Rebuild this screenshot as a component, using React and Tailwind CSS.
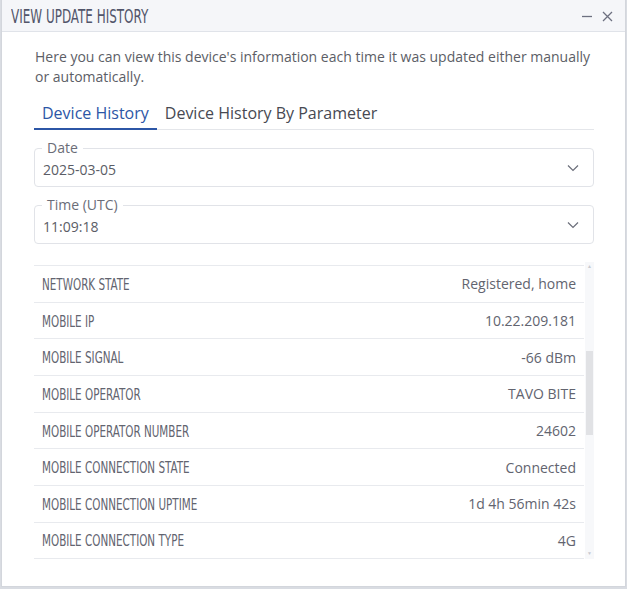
import React from "react";

const ROWS = [
  ["NETWORK STATE", "Registered, home"],
  ["MOBILE IP", "10.22.209.181"],
  ["MOBILE SIGNAL", "-66 dBm"],
  ["MOBILE OPERATOR", "TAVO BITE"],
  ["MOBILE OPERATOR NUMBER", "24602"],
  ["MOBILE CONNECTION STATE", "Connected"],
  ["MOBILE CONNECTION UPTIME", "1d 4h 56min 42s"],
  ["MOBILE CONNECTION TYPE", "4G"],
];

const narrow = "font-['Liberation_Sans_Narrow','DejaVu_Sans_Condensed',sans-serif]";

function Chevron() {
  return (
    <svg width="12" height="8" viewBox="0 0 12 8" fill="none" className="text-[#6b6e7a]">
      <path d="M1 1.5 6 6.5 11 1.5" stroke="currentColor" strokeWidth="1.2" />
    </svg>
  );
}

function Field({ label, value }) {
  return (
    <div className="relative h-[39px] rounded-[4px] border border-[#e1e3e8] flex items-center pl-[8px] pr-[14px]">
      <span className="absolute left-[7px] top-[-11px] bg-white px-[5px] text-[14px] leading-[20px] text-[#6b6d78]">
        {label}
      </span>
      <span className="flex-1 text-[14px] text-[#5b5d66] pt-[3px]">{value}</span>
      <Chevron />
    </div>
  );
}

export default function App() {
  return (
    <div className="w-[627px] h-[589px] bg-[#d9dce2] pl-[1px] pr-[1px] pb-[2px] font-['Open_Sans',sans-serif]">
      <div className="h-full bg-white border border-[#d3d6dc] border-t-0 flex flex-col">
        <div className="h-[32px] shrink-0 bg-[#f5f6f9] border-b border-[#e0e3e9] flex items-center pl-[9px] pr-[12px]">
          <div className="flex-1 pt-[2px]">
            <span className={`${narrow} inline-block text-[20px] leading-[24px] text-[#52556a] scale-x-[0.665] origin-left`}>
              VIEW UPDATE HISTORY
            </span>
          </div>
          <div className="flex items-center gap-[10px] text-[#6d7080] pt-[1px]">
            <svg width="10" height="10" viewBox="0 0 10 10"><path d="M0 5.5h10" stroke="currentColor" strokeWidth="1.3" /></svg>
            <svg width="11" height="11" viewBox="0 0 11 11"><path d="M1 1l9 9M10 1l-9 9" stroke="currentColor" strokeWidth="1.3" /></svg>
          </div>
        </div>

        <div className="pl-[32px] pr-[31px] pt-[15px]">
          <p className="pl-[1px] text-[14px] leading-[20px] text-[#5c5e66]">
            Here you can view this device's information each time it was updated either manually or automatically.
          </p>

          <div className="mt-[15px] flex border-b border-[#e4e6ea] text-[16px] leading-[22px]">
            <div className="px-[8px] pb-[4px] text-[#2c56a6] border-b-2 border-[#2c56a6] mb-[-1px]">Device History</div>
            <div className="px-[8px] pb-[4px] text-[#474952]">Device History By Parameter</div>
          </div>

          <div className="mt-[18px] flex flex-col gap-[18px]">
            <Field label="Date" value="2025-03-05" />
            <Field label="Time (UTC)" value="11:09:18" />
          </div>

          <div className="mt-[18px] flex h-[297px]">
            <div className="flex-1 pt-[3px]">
              {ROWS.map(([k, v]) => (
                <div key={k} className="h-[36.7px] border-t border-[#e8eaee] last:border-b flex items-center justify-between pl-[8px] pr-[8px]">
                  <span className={`${narrow} inline-block pt-[3px] text-[16.5px] text-[#62646f] scale-x-[0.7] origin-left`}>{k}</span>
                  <span className="text-[14px] text-[#62646f]">{v}</span>
                </div>
              ))}
            </div>
            <div className="w-[9px] ml-[1px] bg-[#f7f8fa] flex flex-col items-center">
              <div className="h-[10px] flex items-center text-[#c8cad0] text-[5px]">▲</div>
              <div className="mt-[79px] w-[7px] h-[84px] bg-[#e1e2e5]"></div>
              <div className="flex-1"></div>
              <div className="h-[10px] flex items-center text-[#c8cad0] text-[5px]">▼</div>
            </div>
          </div>
        </div>
      </div>
    </div>
  );
}
